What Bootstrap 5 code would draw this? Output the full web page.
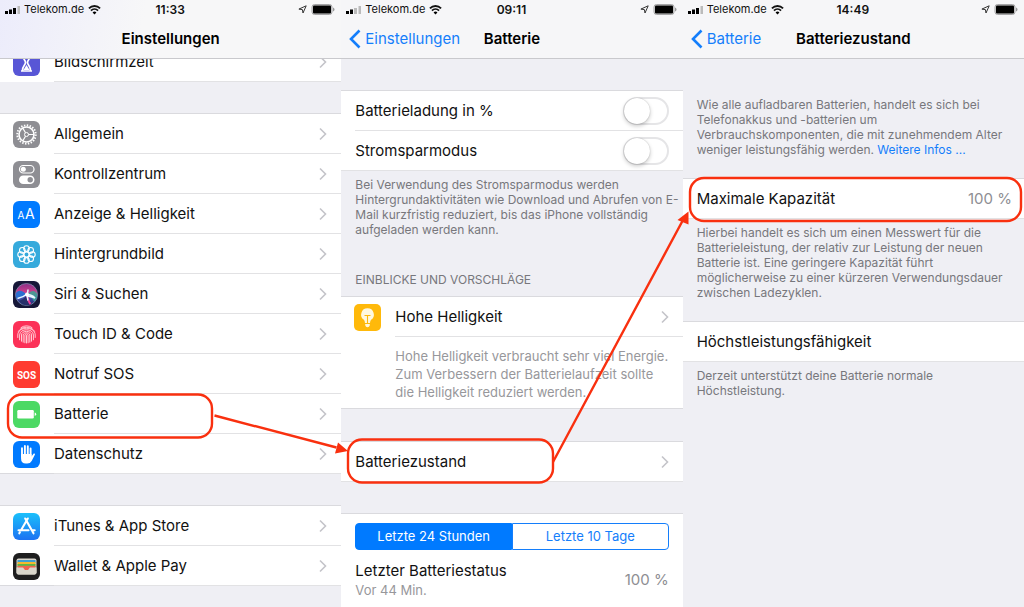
<!DOCTYPE html>
<html lang="de">
<head>
<meta charset="utf-8">
<meta name="viewport" content="width=device-width, initial-scale=1">
<title>Batteriezustand prüfen</title>
<link href="https://cdn.jsdelivr.net/npm/bootstrap@5.3.0/dist/css/bootstrap.min.css" rel="stylesheet">
<style>
  body { font-family: Inter, "Liberation Sans", sans-serif; font-size: 15px; line-height: 20px; color: #111; background: #efeff4; }
  a { text-decoration: none; }
  .guide { min-height: 100vh; }
  .screen { background: #efeff4; }
  .topbar { height: 59px; background: #f6f6f8; border-bottom: 1px solid #c9c9cd; }
  .topbar-tint { background: linear-gradient(100deg, #ececfb 0, #f7f7f8 42%); }
  .thirds { display: grid; grid-template-columns: 1fr auto 1fr; align-items: center; }
  .status { height: 19px; padding: 0 6px 0 5px; font-size: 11px; line-height: 19px; }
  .status .clock { font-size: 12px; font-weight: 600; }
  .titlebar { height: 39px; padding: 0 8px; }
  .titlebar h1 { font-size: 15px; line-height: 20px; font-weight: 600; color: #000; }
  .back, .more { color: #147efb; }
  .group { background: #fff; border-top: 1px solid #dadade; }
  .cell { height: 40px; padding-left: 13px; color: #111; }
  .cell-body { height: 40px; padding-right: 14px; border-bottom: 1px solid #e2e2e4; }
  .group > .cell:last-child { box-shadow: inset 0 -1px #dadade; }
  .inset { padding-left: 14px; }
  .cell-body.plain { margin-left: 14px; }
  .cell-body.value { padding-right: 12px; }
  .appicon { width: 27px; height: 27px; margin-right: 14px; flex: none; }
  .chev { width: 8px; height: 14px; flex: none; fill: none; stroke: #c4c4c9; stroke-width: 1.6; }
  .peek { height: 23px; overflow: hidden; background: #fff; }
  .space { height: 31px; }
  .space-lg { height: 32px; }
  .note { padding: 6px 14px 0; font-size: 12px; line-height: 15px; color: #77777c; white-space: nowrap; }
  .note-gap { margin-bottom: 21px; }
  .caption { margin: 0; padding: 35px 14px 9px; font-size: 12px; line-height: 15px; font-weight: 400; color: #77777c; }
  .muted { color: #8e8e93; }
  .hint { font-size: 13px; line-height: 18px; color: #97979b; }
  .hint-block { padding: 10px 0 7px 54px; border-bottom: 1px solid #dadade; white-space: nowrap; }
  .panel-body { padding: 9px 14px 0; }
  .segments { margin-bottom: 11px; }
  .switch { appearance: none; width: 46px; height: 28px; border-radius: 14px; border: 2px solid #e5e5e7; background: #fff; margin: 0; }
  .switch::before { content: ""; display: block; width: 26px; height: 26px; margin: -1px; border-radius: 50%; background: #fff; box-shadow: 0 2px 4px rgba(0,0,0,.22), 0 0 1px rgba(0,0,0,.3); }
  .switch:checked { background: #4cd964; }
  .switch:checked::before { margin-left: 17px; }
  .segments .btn { height: 27px; padding: 0; border: 1px solid #147efb; border-radius: 4px; font-size: 13px; line-height: 25px; color: #147efb; }
  .segments .btn.active { background: #007aff; color: #fff; border-color: #007aff; }
  .marks { position: absolute; left: 0; top: 0; width: 100%; height: 607px; pointer-events: none; }
</style>
</head>
<body>
<svg width="0" height="0" class="position-absolute" aria-hidden="true">
  <defs>
    <symbol id="wifi" viewBox="0 0 14 11"><path d="M1 4.200a8.600 8.600 0 0 1 12 0M3.200 6.700a5.400 5.400 0 0 1 7.600 0" fill="none" stroke="#111" stroke-width="2"/><path d="M7 10.800 4.900 8.700a3 3 0 0 1 4.200 0z"/></symbol>
    <symbol id="locate" viewBox="0 0 9 9"><path d="M8.200.8 5 8 4.400 4.600.9 4.100z" fill="none" stroke="#333" stroke-width="1" stroke-linejoin="round"/></symbol>
    <symbol id="battery" viewBox="0 0 24 11"><rect x="1" y=".5" width="20" height="10" rx="2.500" fill="#ddd" stroke="#a5a5a7"/><rect x="2" y="1.500" width="18" height="8" rx="1" fill="#000"/><path d="M22 3.500q1.500.5 1.500 2t-1.500 2z" fill="#999"/></symbol>
    <symbol id="chev" viewBox="0 0 8 14"><path d="m1 1.500 5.500 5.500L1 12.500"/></symbol>
    <symbol id="back" viewBox="0 0 12 20"><path d="M10.500 1.500 2 10l8.500 8.500" fill="none" stroke="#147efb" stroke-width="2.600"/></symbol>
  </defs>
</svg>
<main class="guide row row-cols-3 g-0 position-relative overflow-hidden">

  <section class="col screen">
    <header class="topbar topbar-tint">
      <div class="status thirds">
        <div class="d-flex align-items-center gap-1">
          <svg width="15" height="8"><path d="M0 5h3v3H0zM4 3.500h3V8H4zM8 2h3v6H8z"/><path d="M12.500 0H15v8h-2.500z" fill="#bbb"/></svg>
          <span>Telekom.de</span><svg width="13" height="11"><use href="#wifi"/></svg>
        </div>
        <span class="clock">11:33</span>
        <div class="d-flex align-items-center justify-content-end gap-1"><svg width="9" height="9"><use href="#locate"/></svg><svg width="24" height="11"><use href="#battery"/></svg></div>
      </div>
      <div class="titlebar thirds"><span></span><h1 class="m-0">Einstellungen</h1><span></span></div>
    </header>

    <div class="peek d-flex align-items-end">
      <a href="#" class="cell d-flex align-items-center w-100">
        <svg class="appicon" viewBox="0 0 27 27"><rect width="27" height="27" rx="6" fill="#5856d6"/><path d="M8 4.500h11M8 22h11M9.500 5c0 5 3 6 3 8.500s-3 3.500-3 8M17.500 5c0 5-3 6-3 8.500s3 3.500 3 8" fill="none" stroke="#fff" stroke-width="1.700"/><path d="m13.500 16 3 5h-6z" fill="#fff"/></svg>
        <div class="cell-body d-flex align-items-center flex-grow-1"><span class="flex-grow-1">Bildschirmzeit</span><svg class="chev"><use href="#chev"/></svg></div>
      </a>
    </div>
    <div class="space"></div>
    <nav class="group">
      <a href="#" class="cell d-flex align-items-center">
        <svg class="appicon" viewBox="0 0 27 27"><rect width="27" height="27" rx="6" fill="#8e8e93"/><g fill="none" stroke="#fff"><circle cx="13.500" cy="13.500" r="9.200" stroke-width="2" stroke-dasharray="1.445 1.445"/><circle cx="13.500" cy="13.500" r="7.500" stroke-width="1.600"/><circle cx="13.500" cy="13.500" r="2"/><path d="M15.500 13.500H21M12.500 11.700 9.700 7M12.500 15.300 9.700 20" stroke-width="1.200"/></g></svg>
        <div class="cell-body d-flex align-items-center flex-grow-1"><span class="flex-grow-1">Allgemein</span><svg class="chev"><use href="#chev"/></svg></div>
      </a>
      <a href="#" class="cell d-flex align-items-center">
        <svg class="appicon" viewBox="0 0 27 27"><rect width="27" height="27" rx="6" fill="#8e8e93"/><rect x="6.500" y="4.500" width="14.500" height="7.500" rx="3.750" fill="none" stroke="#fff" stroke-width="1.200"/><circle cx="10.300" cy="8.250" r="2.500" fill="#fff"/><rect x="6" y="14.500" width="15.500" height="8.500" rx="4.250" fill="#fff"/><circle cx="17.200" cy="18.750" r="2.700" fill="#8e8e93"/></svg>
        <div class="cell-body d-flex align-items-center flex-grow-1"><span class="flex-grow-1">Kontrollzentrum</span><svg class="chev"><use href="#chev"/></svg></div>
      </a>
      <a href="#" class="cell d-flex align-items-center">
        <svg class="appicon" viewBox="0 0 27 27"><rect width="27" height="27" rx="6" fill="#007aff"/><text x="4.500" y="18" font-size="10" fill="#fff">A</text><text x="12" y="18" font-size="14" fill="#fff">A</text></svg>
        <div class="cell-body d-flex align-items-center flex-grow-1"><span class="flex-grow-1">Anzeige &amp; Helligkeit</span><svg class="chev"><use href="#chev"/></svg></div>
      </a>
      <a href="#" class="cell d-flex align-items-center">
        <svg class="appicon" viewBox="0 0 27 27"><rect width="27" height="27" rx="6" fill="#36aadc"/><g fill="none" stroke="#fff" stroke-width="1.100"><circle cx="13.500" cy="13.500" r="2.500"/><circle cx="13.500" cy="7.600" r="2.800"/><circle cx="13.500" cy="19.400" r="2.800"/><circle cx="7.600" cy="13.500" r="2.800"/><circle cx="19.400" cy="13.500" r="2.800"/><circle cx="9.300" cy="9.300" r="2.800"/><circle cx="17.700" cy="9.300" r="2.800"/><circle cx="9.300" cy="17.700" r="2.800"/><circle cx="17.700" cy="17.700" r="2.800"/></g></svg>
        <div class="cell-body d-flex align-items-center flex-grow-1"><span class="flex-grow-1">Hintergrundbild</span><svg class="chev"><use href="#chev"/></svg></div>
      </a>
      <a href="#" class="cell d-flex align-items-center">
        <svg class="appicon" viewBox="0 0 27 27"><defs><linearGradient id="siri" x1="0" y1="0" x2="0" y2="1"><stop offset="0" stop-color="#8a2f86"/><stop offset=".45" stop-color="#d4408f"/><stop offset=".6" stop-color="#4a54b8"/><stop offset="1" stop-color="#1d2a66"/></linearGradient></defs><rect width="27" height="27" rx="6" fill="#161738"/><circle cx="13.500" cy="13.500" r="11" fill="url(#siri)" stroke="#8193b1" stroke-width=".7"/><path d="M14 13.500C9 9 5.500 8.500 3 12c-.5 3 0 5 1 6 4-.5 7-2 10-4.500" fill="#2b6fd0"/><path d="M14 13.500c5-5 8-4 10-1 .5 4-1 7-3 8-2-4-4-5.500-7-7" fill="#37a595" opacity=".85"/><path d="M14 14c-2 3-5 5-8 6 3 4 8 5 12 3.500-2-3-3-6-4-9.500" fill="#27306a"/><path d="M14 14c1 4 1.500 7 3.500 9" stroke="#ed3d9a" stroke-width="2" fill="none"/><path d="M4.500 17.500q5.500-1 9.500-4.500M14 13.500q1-2 1-5M14 13.500q5 0 8 3.500-4-1.500-8-2M14 13.500q.5 4 1 6" stroke="#e8f6ff" stroke-width="1.500" fill="none"/><circle cx="14" cy="13.500" r="2" fill="#fff"/></svg>
        <div class="cell-body d-flex align-items-center flex-grow-1"><span class="flex-grow-1">Siri &amp; Suchen</span><svg class="chev"><use href="#chev"/></svg></div>
      </a>
      <a href="#" class="cell d-flex align-items-center">
        <svg class="appicon" viewBox="0 0 27 27"><rect width="27" height="27" rx="6" fill="#fc3158"/><g fill="none" stroke="#ffdbe1" stroke-width=".9" stroke-linecap="round"><path d="M8 6.600a9 9 0 0 1 11 0M5.500 10.200C9 4.800 18 4.800 21.500 10.200M4.800 16.500V14c0-9 17.400-9 17.400 0v2.500M6.600 18.800V14c0-7 13.800-7 13.800 0v4.800M8.500 20.200V14c0-4.900 10-4.900 10 0v6.200M10.200 21.200V14c0-2.900 6.600-2.900 6.600 0v7.200M11.900 21.800V14c0-1.400 3.200-1.400 3.200 0v7.800M13.500 14.500v7.500"/></g></svg>
        <div class="cell-body d-flex align-items-center flex-grow-1"><span class="flex-grow-1">Touch ID &amp; Code</span><svg class="chev"><use href="#chev"/></svg></div>
      </a>
      <a href="#" class="cell d-flex align-items-center">
        <svg class="appicon" viewBox="0 0 27 27"><rect width="27" height="27" rx="6" fill="#ff3b30"/><text x="13.500" y="17.500" font-family="Roboto, sans-serif" font-size="10" font-weight="700" text-anchor="middle" fill="#fff">SOS</text></svg>
        <div class="cell-body d-flex align-items-center flex-grow-1"><span class="flex-grow-1">Notruf SOS</span><svg class="chev"><use href="#chev"/></svg></div>
      </a>
      <a href="#" class="cell d-flex align-items-center">
        <svg class="appicon" viewBox="0 0 27 27"><rect width="27" height="27" rx="6" fill="#4cd964"/><rect x="4.300" y="9" width="16.500" height="8.500" rx="1.200" fill="#fff"/><path d="M21.700 11.500q1.500.4 1.500 1.700t-1.500 1.700z" fill="#fff"/></svg>
        <div class="cell-body d-flex align-items-center flex-grow-1"><span class="flex-grow-1">Batterie</span><svg class="chev"><use href="#chev"/></svg></div>
      </a>
      <a href="#" class="cell d-flex align-items-center">
        <svg class="appicon" viewBox="0 0 27 27"><rect width="27" height="27" rx="6" fill="#007aff"/><path d="M9 15.500V7.300M11.900 14V5M14.800 14V5.300M17.600 15V7.500" stroke="#fff" stroke-width="1.900" stroke-linecap="round"/><path d="M8.050 13h10.500v2.500l1.800-2.600c.9-1 2-.2 1.500.8l-3.200 6.300q-1.300 2.500-4.500 2.500h-1.300q-4.800 0-4.800-5z" fill="#fff"/></svg>
        <div class="cell-body d-flex align-items-center flex-grow-1"><span class="flex-grow-1">Datenschutz</span><svg class="chev"><use href="#chev"/></svg></div>
      </a>
    </nav>
    <div class="space"></div>
    <nav class="group">
      <a href="#" class="cell d-flex align-items-center">
        <svg class="appicon" viewBox="0 0 27 27"><defs><linearGradient id="store" x1="0" y1="0" x2="0" y2="1"><stop stop-color="#1bc0fb"/><stop offset="1" stop-color="#1c72f2"/></linearGradient></defs><rect width="27" height="27" rx="6" fill="url(#store)"/><path d="M14.800 5.500 8 17.300M12.200 5.500l8.300 14.800M5.500 17.300h10M18.700 17.300h3M6.900 19.300l-.6 1" stroke="#fff" stroke-width="2.100" stroke-linecap="round" fill="none"/></svg>
        <div class="cell-body d-flex align-items-center flex-grow-1"><span class="flex-grow-1">iTunes &amp; App Store</span><svg class="chev"><use href="#chev"/></svg></div>
      </a>
      <a href="#" class="cell d-flex align-items-center">
        <svg class="appicon" viewBox="0 0 27 27"><rect width="27" height="27" rx="6" fill="#1e1e1f"/><rect x="3.500" y="5.500" width="20" height="16" rx="2" fill="#d9d6cc"/><path d="M4.500 7h18v3h-18z" fill="#3e9fd3"/><path d="M4.500 9h18v3h-18z" fill="#f5b92f"/><path d="M4.500 11h18v3h-18z" fill="#5bb947"/><path d="M4.500 12.800h18V17h-18z" fill="#f0624f"/><path d="M3.500 14.500h5.700c1 0 1.400.5 1.800 1.200 1.200 2 3.800 2 5 0 .4-.7.800-1.200 1.800-1.200h5.700v5q0 2-2 2h-16q-2 0-2-2z" fill="#d9d6cc"/></svg>
        <div class="cell-body d-flex align-items-center flex-grow-1"><span class="flex-grow-1">Wallet &amp; Apple Pay</span><svg class="chev"><use href="#chev"/></svg></div>
      </a>
    </nav>
  </section>

  <section class="col screen d-flex flex-column">
    <header class="topbar">
      <div class="status thirds">
        <div class="d-flex align-items-center gap-1">
          <svg width="15" height="8"><path d="M0 5h3v3H0zM4 3.500h3V8H4z"/><path d="M8 2h3v6H8zM12.500 0H15v8h-2.500z" fill="#bbb"/></svg>
          <span>Telekom.de</span><svg width="13" height="11"><use href="#wifi"/></svg>
        </div>
        <span class="clock">09:11</span>
        <div class="d-flex align-items-center justify-content-end gap-1"><svg width="9" height="9"><use href="#locate"/></svg><svg width="24" height="11"><use href="#battery"/></svg></div>
      </div>
      <div class="titlebar thirds"><a href="#" class="back d-flex align-items-center gap-1"><svg width="12" height="20"><use href="#back"/></svg>Einstellungen</a><h1 class="m-0">Batterie</h1><span></span></div>
    </header>
    <div class="space"></div>
    <div class="group">
      <div class="cell-body plain d-flex align-items-center"><label class="flex-grow-1" for="pct">Batterieladung in %</label><input class="switch" type="checkbox" role="switch" id="pct"></div>
      <div class="cell-body inset d-flex align-items-center"><label class="flex-grow-1" for="save">Stromsparmodus</label><input class="switch" type="checkbox" role="switch" id="save"></div>
    </div>
    <p class="note m-0">Bei Verwendung des Stromsparmodus werden<br>Hintergrundaktivitäten wie Download und Abrufen von E-<br>Mail kurzfristig reduziert, bis das iPhone vollständig<br>aufgeladen werden kann.</p>
    <h2 class="caption">EINBLICKE UND VORSCHLÄGE</h2>
    <div class="group">
      <a href="#" class="cell d-flex align-items-center">
        <svg class="appicon" viewBox="0 0 27 27"><rect width="27" height="27" rx="5" fill="#ffb90a"/><path d="M13.500 4.300a6.300 6.300 0 0 0-3.600 11.500q.9.900 1.100 3.200h5q.2-2.300 1.100-3.200A6.300 6.300 0 0 0 13.500 4.300M11.200 20h4.600v1.300q-.5 2-2.300 2t-2.300-2z" fill="#fff8df"/><path d="M10.500 11.500h6M13.500 11.500V19" stroke="#ffb90a" stroke-width="1.100"/></svg>
        <div class="cell-body d-flex align-items-center flex-grow-1"><span class="flex-grow-1">Hohe Helligkeit</span><svg class="chev"><use href="#chev"/></svg></div>
      </a>
      <p class="hint hint-block m-0">Hohe Helligkeit verbraucht sehr viel Energie.<br>Zum Verbessern der Batterielaufzeit sollte<br>die Helligkeit reduziert werden.</p>
    </div>
    <div class="space-lg"></div>
    <nav class="group"><a href="#" class="cell-body inset d-flex align-items-center text-reset"><span class="flex-grow-1">Batteriezustand</span><svg class="chev"><use href="#chev"/></svg></a></nav>
    <div class="space"></div>
    <div class="group panel-body flex-grow-1">
      <div class="segments d-flex" role="group" aria-label="Zeitraum"><button type="button" class="btn active w-50 rounded-end-0">Letzte 24 Stunden</button><button type="button" class="btn w-50 rounded-start-0">Letzte 10 Tage</button></div>
      <div class="d-flex align-items-center justify-content-between"><div>Letzter Batteriestatus<div class="hint">Vor 44 Min.</div></div><span class="muted">100 %</span></div>
    </div>
  </section>

  <section class="col screen">
    <header class="topbar">
      <div class="status thirds">
        <div class="d-flex align-items-center gap-1">
          <svg width="15" height="8"><path d="M0 5h3v3H0zM4 3.500h3V8H4zM8 2h3v6H8z"/><path d="M12.500 0H15v8h-2.500z" fill="#bbb"/></svg>
          <span>Telekom.de</span><svg width="13" height="11"><use href="#wifi"/></svg>
        </div>
        <span class="clock">14:49</span>
        <div class="d-flex align-items-center justify-content-end gap-1"><svg width="9" height="9"><use href="#locate"/></svg><svg width="24" height="11"><use href="#battery"/></svg></div>
      </div>
      <div class="titlebar thirds"><a href="#" class="back d-flex align-items-center gap-1"><svg width="12" height="20"><use href="#back"/></svg>Batterie</a><h1 class="m-0">Batteriezustand</h1><span></span></div>
    </header>
    <div class="space-lg"></div>
    <p class="note note-gap">Wie alle aufladbaren Batterien, handelt es sich bei<br>Telefonakkus und -batterien um<br>Verbrauchskomponenten, die mit zunehmendem Alter<br>weniger leistungsfähig werden. <a href="#" class="more">Weitere Infos ...</a></p>
    <div class="group"><div class="cell-body inset value d-flex align-items-center"><span class="flex-grow-1">Maximale Kapazität</span><span class="muted">100 %</span></div></div>
    <p class="note note-gap">Hierbei handelt es sich um einen Messwert für die<br>Batterieleistung, der relativ zur Leistung der neuen<br>Batterie ist. Eine geringere Kapazität führt<br>möglicherweise zu einer kürzeren Verwendungsdauer<br>zwischen Ladezyklen.</p>
    <div class="group"><div class="cell-body inset d-flex align-items-center">Höchstleistungsfähigkeit</div></div>
    <p class="note m-0">Derzeit unterstützt deine Batterie normale<br>Höchstleistung.</p>
  </section>

  <svg class="marks" viewBox="0 0 1024 607" preserveAspectRatio="none" aria-hidden="true">
    <g fill="none" stroke="#f9300f" stroke-width="2.400">
      <rect x="8" y="394.500" width="204" height="43" rx="14"/>
      <rect x="348" y="439.500" width="205" height="43" rx="14"/>
      <rect x="690" y="178" width="331" height="43" rx="14"/>
      <path d="m214.500 415.500 122 32M553 462l130-242"/>
    </g>
    <path d="m348 451-13 2.500 3-11zM688.500 211.500l-11 8.500 11 4.500z" fill="#f9300f"/>
  </svg>
</main>
<script src="https://cdn.jsdelivr.net/npm/bootstrap@5.3.0/dist/js/bootstrap.bundle.min.js"></script>
</body>
</html>
